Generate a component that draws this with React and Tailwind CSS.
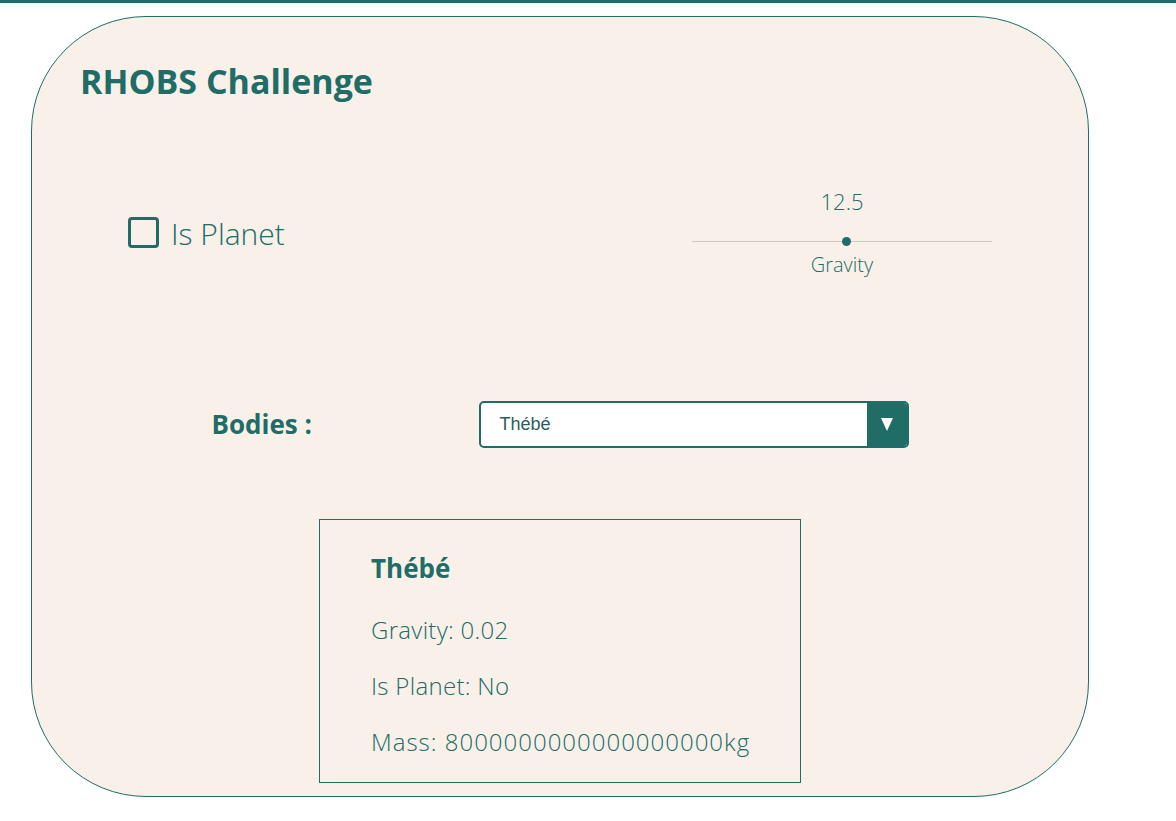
import React, { useState } from 'react';

const App = () => {
  const [isPlanet, setIsPlanet] = useState(false);
  const [gravity] = useState(12.5);
  const body = {
    name: 'Thébé',
    gravity: 0.02,
    isPlanet: false,
    mass: '8000000000000000000',
  };

  return (
    <div className="min-h-screen bg-white text-[#206c67]" style={{ fontFamily: '"Open Sans", "Noto Sans", sans-serif' }}>
      <div className="h-[3px] bg-[#206c67]" />
      <div className="ml-[31px] mt-[13px] w-[1058px] h-[781px] rounded-[115px] border border-[#206c67] bg-[#f9f0ea] flex flex-col">
        <h1 className="ml-[48px] mt-[44px] text-[34px] font-bold leading-[40px]">RHOBS Challenge</h1>

        <div className="mt-[86px] mx-auto w-[864px] flex items-center justify-between">
          <label className="flex items-center gap-[12px] cursor-pointer" onClick={() => setIsPlanet(!isPlanet)}>
            <div className="w-[31px] h-[31px] border-[3px] border-[#206c67] rounded-[4px]" />
            <span className="text-[30px] font-light leading-[36px] pt-[3px]">Is Planet</span>
          </label>

          <div className="w-[300px] flex flex-col items-center">
            <span className="text-[22px] font-light leading-[28px]">{gravity}</span>
            <div className="relative mt-[20px] h-[12px] w-full flex items-center">
              <div className="h-[1px] w-full bg-[#cfc8c3]" />
              <div className="absolute left-[150px] top-[2px] w-[9px] h-[9px] rounded-full bg-[#206c67]" />
            </div>
            <span className="mt-[6px] text-[20px] font-light leading-[24px]">Gravity</span>
          </div>
        </div>

        <div className="mt-[124px] mx-auto w-[697px] flex items-center justify-between">
          <span className="text-[26px] font-bold">Bodies :</span>
          <div className="w-[430px] h-[47px] border-2 border-[#206c67] rounded-[5px] bg-white flex overflow-hidden">
            <div className="flex-1 flex items-center pl-[19px] text-[18px] text-[#2d5d5a]" style={{ fontFamily: '"Liberation Sans", Arial, sans-serif' }}>
              {body.name}
            </div>
            <div className="w-[40px] bg-[#206c67] flex items-center justify-center">
              <svg width="12" height="13" viewBox="0 0 12 13">
                <polygon points="0,0 12,0 6,13" fill="white" />
              </svg>
            </div>
          </div>
        </div>

        <div className="mt-[71px] mx-auto w-[482px] h-[264px] border border-[#206c67] pl-[51px] pt-[28px]">
          <h2 className="text-[26px] font-bold leading-[40px]">{body.name}</h2>
          <p className="mt-[14px] text-[24px] font-light leading-[56px] tracking-[0.3px]">Gravity: {body.gravity}</p>
          <p className="text-[24px] font-light leading-[56px] tracking-[0.3px]">Is Planet: {body.isPlanet ? 'Yes' : 'No'}</p>
          <p className="text-[24px] font-light leading-[56px] tracking-[1px]">Mass: {body.mass}kg</p>
        </div>
      </div>
    </div>
  );
};

export default App;
